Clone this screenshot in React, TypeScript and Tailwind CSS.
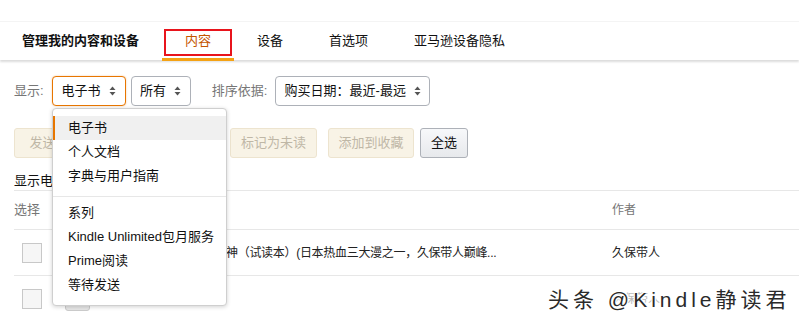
import React from "react";

const Arrow = () => (
  <svg width="7" height="10" viewBox="0 0 7 10" className="ml-2 shrink-0">
    <path d="M3.5 0.5 L6.5 4 L0.5 4 Z" fill="#555" />
    <path d="M3.5 9.5 L6.5 6 L0.5 6 Z" fill="#555" />
  </svg>
);

function Select({ label, w, active }: { label: string; w: string; active?: boolean }) {
  return (
    <div
      className={`flex h-[30px] items-center justify-center rounded-[4px] border bg-white text-[13px] text-[#111] ${w} ${
        active ? "border-[#e77600] shadow-[0_0_2px_rgba(228,121,17,0.4)]" : "border-[#adb1b8]"
      }`}
    >
      <span>{label}</span>
      <Arrow />
    </div>
  );
}

function DisBtn({ label, w }: { label: string; w: string }) {
  return (
    <div
      className={`flex h-[30px] items-center justify-center rounded-[3px] border border-[#ede4cf] bg-[#f8f3e6] text-[13px] text-[#bfb7a6] ${w}`}
    >
      {label}
    </div>
  );
}

export default function App() {
  const font = {
    fontFamily: '"Liberation Sans", "Noto Sans CJK SC", sans-serif',
  };
  return (
    <div className="relative h-[321px] w-[799px] overflow-hidden bg-white" style={font}>
      {/* header */}
      <div className="mt-[21px] flex h-[39px] items-center border-t border-[#f4f4f4] bg-white pl-[22px] shadow-[0_2px_2px_rgba(0,0,0,0.14)]">
        <div className="text-[13px] font-bold text-[#111]">管理我的内容和设备</div>
        <div className="relative ml-[25px] flex h-[39px] w-[68px] items-center justify-center">
          <div className="absolute left-0 top-[7px] h-[27px] w-[68px] border-2 border-[#e8141c]" />
          <span className="text-[13px] text-[#c45500]">内容</span>
          <div className="absolute bottom-0 left-[-2px] h-[3px] w-[72px] bg-[#f4a214]" />
        </div>
        <div className="ml-[25px] text-[13px] text-[#111]">设备</div>
        <div className="ml-[46px] text-[13px] text-[#111]">首选项</div>
        <div className="ml-[46px] text-[13px] text-[#111]">亚马逊设备隐私</div>
      </div>

      {/* filters */}
      <div className="mt-[16px] flex items-center pl-[14px]">
        <span className="text-[13px] text-[#767676]">显示:</span>
        <div className="ml-[8px]">
          <Select label="电子书" w="w-[74px]" active />
        </div>
        <div className="ml-[5px]">
          <Select label="所有" w="w-[60px]" />
        </div>
        <span className="ml-[21px] text-[13px] text-[#767676]">排序依据:</span>
        <div className="ml-[8px]">
          <Select label="购买日期：最近-最远" w="w-[155px]" />
        </div>
      </div>

      {/* buttons */}
      <div className="mt-[22px] flex items-center pl-[14px]">
        <DisBtn label="发送到设备" w="w-[96px]" />
        <div className="ml-[10px]">
          <DisBtn label="从库中删除" w="w-[100px]" />
        </div>
        <div className="ml-[10px]">
          <DisBtn label="标记为未读" w="w-[87px]" />
        </div>
        <div className="ml-[11px]">
          <DisBtn label="添加到收藏" w="w-[86px]" />
        </div>
        <div className="ml-[6px] flex h-[30px] w-[48px] items-center justify-center rounded-[3px] border border-[#adb1b8] bg-gradient-to-b from-[#f7f8fa] to-[#e7e9ec] text-[13px] text-[#111]">
          全选
        </div>
      </div>

      {/* count */}
      <div className="ml-[14px] mt-[14px] h-[19px] border-b border-[#e7e7e7] text-[13px] leading-[18px] text-[#111]">
        显示电子书：1 项
      </div>

      {/* table header */}
      <div className="ml-[14px] flex h-[39px] items-center border-b border-[#e7e7e7] text-[13px] text-[#767676]">
        <span className="w-[598px]">选择</span>
        <span className="text-[12px]">作者</span>
      </div>

      {/* row 1 */}
      <div className="ml-[14px] flex h-[46px] items-center border-b border-[#e7e7e7] text-[12px] text-[#222]">
        <div className="ml-[8px] h-[20px] w-[20px] border border-[#c8c8c8] bg-[#f6f6f6]" />
        <div className="ml-[23px] h-[24px] w-[25px] rounded-[3px] border border-[#ccc] bg-[#e6e6e6]" />
        <div className="ml-[10px] flex w-[512px] items-center overflow-hidden whitespace-nowrap">
          <span className="w-[126px] overflow-hidden text-right">BLEACH 死</span>
          <span className="tracking-[-0.3px]">神（试读本）(日本热血三大漫之一，久保带人巅峰...</span>
        </div>
        <span className="w-[80px]">久保带人</span>
      </div>

      {/* row 2 */}
      <div className="ml-[14px] flex h-[46px] items-center text-[12px] text-[#222]">
        <div className="ml-[8px] h-[20px] w-[20px] border border-[#c8c8c8] bg-[#f6f6f6]" />
        <div className="ml-[23px] h-[24px] w-[25px] rounded-[3px] border border-[#ccc] bg-[#e6e6e6]" />
        <div className="ml-[10px] w-[512px] overflow-hidden whitespace-nowrap">BLEACH 死神 第2卷</div>
        <span className="w-[80px] text-[#bbb]">久保带人</span>
      </div>

      {/* dropdown */}
      <div className="absolute left-[52px] top-[108px] w-[175px] rounded-[4px] border border-[#cfcfcf] bg-white pb-[8px] pt-[7px] text-[13px] text-[#111] shadow-[0_1px_4px_rgba(0,0,0,0.18)]">
        <div className="flex h-[24px] items-center border-l-2 border-[#e77600] bg-[#f0f0f0] pl-[13px]">电子书</div>
        <div className="flex h-[24px] items-center pl-[15px]">个人文档</div>
        <div className="flex h-[24px] items-center pl-[15px]">字典与用户指南</div>
        <div className="mb-[4px] mt-[8px] h-px bg-[#e7e7e7]" />
        <div className="flex h-[24px] items-center pl-[15px]">系列</div>
        <div className="flex h-[24px] items-center pl-[15px]">Kindle Unlimited包月服务</div>
        <div className="flex h-[24px] items-center pl-[15px]">Prime阅读</div>
        <div className="flex h-[24px] items-center pl-[15px]">等待发送</div>
      </div>

      {/* watermark */}
      <div
        className="absolute left-[548px] top-[284px] text-[21px] tracking-[4px] text-[#2a2a2a]"
        style={{ textShadow: "1px 1px 0 #fff, -1px -1px 0 #fff, 1px -1px 0 #fff, -1px 1px 0 #fff" }}
      >
        头条 @Kindle静读君
      </div>
    </div>
  );
}
